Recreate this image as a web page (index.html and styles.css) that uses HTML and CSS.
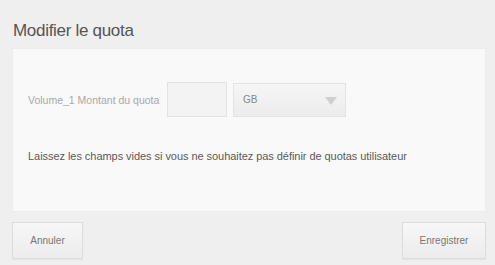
FILE: index.html
```html
<!DOCTYPE html>
<html lang="fr">
<head>
<meta charset="utf-8">
<link rel="stylesheet" href="styles.css">
</head>
<body>
<div class="dialog">
  <h1 class="title">Modifier le quota</h1>
  <div class="panel">
    <div class="row">
      <span class="label">Volume_1 Montant du quota</span>
      <span class="input"></span>
      <span class="select"><span class="select-text">GB</span><span class="arrow"></span></span>
    </div>
    <p class="help">Laissez les champs vides si vous ne souhaitez pas définir de quotas utilisateur</p>
  </div>
  <div class="actions">
    <button class="btn btn-cancel">Annuler</button>
    <button class="btn btn-save">Enregistrer</button>
  </div>
</div>
</body>
</html>
```
FILE: styles.css
```css
html, body {
  margin: 0;
  padding: 0;
  background: #efefef;
}
body {
  font-family: "Liberation Sans", Arial, sans-serif;
  width: 495px;
  height: 265px;
  overflow: hidden;
}
.dialog {
  padding: 0 9px 0 12px;
}
.title {
  margin: 0;
  padding: 21px 0 0 1px;
  height: 27px;
  font-size: 17px;
  font-weight: normal;
  color: #555;
  letter-spacing: -0.3px;
}
.panel {
  background: #f9f9f9;
  border: 1px solid #ececec;
  height: 164px;
  padding: 0 0 0 15px;
  box-sizing: border-box;
}
.row {
  display: flex;
  align-items: center;
  margin-top: 33px;
  height: 35px;
}
.label {
  font-size: 10.5px;
  color: #a8a8a8;
  width: 139px;
}
.input {
  width: 58px;
  height: 33px;
  border: 1px solid #e2e2e2;
  background: #f3f3f3;
}
.select {
  margin-left: 6px;
  width: 113px;
  height: 34px;
  border: 1px solid #e3e3e3;
  background: linear-gradient(#f6f6f6, #ececec);
  display: flex;
  align-items: center;
  justify-content: space-between;
  padding: 0 8px 0 9px;
  box-sizing: border-box;
}
.select-text {
  font-size: 10px;
  color: #888;
}
.arrow {
  width: 0;
  height: 0;
  border-left: 6px solid transparent;
  border-right: 6px solid transparent;
  border-top: 8px solid #cfcfcf;
  margin-top: 3px;
}
.help {
  margin: 33px 0 0;
  font-size: 11px;
  color: #5a5a5a;
  letter-spacing: -0.05px;
}
.actions {
  display: flex;
  justify-content: space-between;
  margin-top: 10px;
}
.btn {
  font-family: inherit;
  font-size: 10px;
  color: #777;
  background: linear-gradient(#f7f7f7, #ececec);
  border: 1px solid #dcdcdc;
  height: 37px;
  padding: 0;
  box-shadow: 0 1px 1px rgba(0,0,0,0.04);
}
.btn-cancel {
  width: 71px;
}
.btn-save {
  width: 84px;
}
```
